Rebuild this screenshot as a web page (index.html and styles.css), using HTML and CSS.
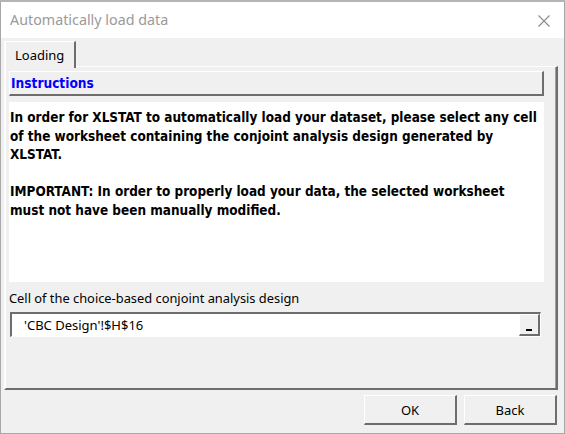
FILE: index.html
```html
<!DOCTYPE html>
<html>
<head>
<meta charset="utf-8">
<link rel="stylesheet" href="styles.css">
</head>
<body>
<div class="strip"></div>
<div class="window">
  <div class="titlebar">
    <span class="title">Automatically load data</span>
    <svg class="close" width="12" height="12" viewBox="0 0 12 12"><path d="M0.5 0.5 L11.5 11.5 M11.5 0.5 L0.5 11.5" stroke="#8a8a8a" stroke-width="1.1" fill="none"/></svg>
  </div>
  <div class="tabstrip">
    <div class="tab">Loading</div>
  </div>
  <div class="page">
    <div class="header">Instructions</div>
    <div class="textarea">
      <p>In order for XLSTAT to automatically load your dataset, please select any cell of the worksheet containing the conjoint analysis design generated by XLSTAT.</p>
      <p>IMPORTANT: In order to properly load your data, the selected worksheet must not have been manually modified.</p>
    </div>
    <div class="label">Cell of the choice-based conjoint analysis design</div>
    <div class="input">
      <span class="value">'CBC Design'!$H$16</span>
      <span class="pick"><span class="dash"></span></span>
    </div>
  </div>
  <div class="footer">
    <div class="btn">OK</div>
    <div class="btn">Back</div>
  </div>
</div>
</body>
</html>
```
FILE: styles.css
```css
html, body {
  margin: 0;
  padding: 0;
  background: #ffffff;
}
.strip {
  height: 2px;
  background: #b4b4b4;
}
.window {
  box-sizing: border-box;
  width: 565px;
  height: 432px;
  border-left: 1px solid #a8a8a8;
  border-right: 1px solid #a8a8a8;
  border-bottom: 1px solid #a8a8a8;
  background: #f0f0f0;
  display: flex;
  flex-direction: column;
  font-family: "Noto Sans", sans-serif;
}
.titlebar {
  height: 36px;
  background: #ffffff;
  display: flex;
  align-items: center;
  justify-content: space-between;
  padding: 0 14px 0 9px;
}
.title {
  font-size: 14.3px;
  color: #9a9a9a;
  padding-bottom: 1px;
}
.close {
  display: block;
  margin-top: 1px;
}
.tabstrip {
  display: flex;
  padding: 3px 0 0 3px;
}
.tab {
  position: relative;
  z-index: 1;
  box-sizing: border-box;
  width: 72px;
  height: 27px;
  margin-bottom: -2px;
  background: #f0f0f0;
  border-top: 1px solid #ffffff;
  border-left: 2px solid #ffffff;
  border-right: 2px solid #6d6d6d;
  font-size: 13px;
  color: #000;
  padding: 4px 0 0 9px;
}
.page {
  box-sizing: border-box;
  height: 324px;
  margin: 0 6px 0 3px;
  border-top: 1px solid #ffffff;
  border-left: 2px solid #ffffff;
  border-right: 2px solid #6d6d6d;
  border-bottom: 2px solid #6d6d6d;
  box-shadow: inset -1px 0 0 #a0a0a0;
  padding: 4px 12px 0 3px;
  display: flex;
  flex-direction: column;
}
.header {
  box-sizing: border-box;
  height: 25px;
  border-top: 1px solid #ffffff;
  border-left: 1px solid #ffffff;
  border-right: 2px solid #6d6d6d;
  border-bottom: 2px solid #6d6d6d;
  font-family: "DejaVu Sans Condensed", "DejaVu Sans", sans-serif;
  font-stretch: condensed;
  font-weight: bold;
  font-size: 13.6px;
  color: #0000ff;
  padding: 3px 0 0 1px;
}
.textarea {
  box-sizing: border-box;
  height: 180px;
  margin-top: 6px;
  background: #ffffff;
  padding: 7px 3px 0 1px;
  font-family: "DejaVu Sans Condensed", "DejaVu Sans", sans-serif;
  font-stretch: condensed;
  font-weight: bold;
  font-size: 13.45px;
  line-height: 18.5px;
  color: #000;
}
.textarea p {
  margin: 0 0 18.5px 0;
}
.label {
  margin-top: 8px;
  font-size: 12.85px;
  line-height: 17px;
  color: #000;
}
.input {
  box-sizing: border-box;
  height: 25px;
  margin: 5px 0 0 1px;
  width: 531px;
  background: #ffffff;
  border-top: 2px solid #6d6d6d;
  border-left: 2px solid #6d6d6d;
  border-right: 1px solid #ffffff;
  border-bottom: 1px solid #ffffff;
  display: flex;
  align-items: stretch;
  justify-content: space-between;
}
.value {
  font-size: 13px;
  padding: 2px 0 0 12px;
}
.pick {
  box-sizing: border-box;
  width: 21px;
  background: #f0f0f0;
  border-top: 1px solid #ffffff;
  border-left: 1px solid #ffffff;
  border-right: 2px solid #6d6d6d;
  border-bottom: 2px solid #6d6d6d;
  display: flex;
  align-items: flex-end;
  justify-content: center;
  padding-bottom: 3px;
}
.dash {
  display: block;
  width: 6px;
  height: 2px;
  background: #000;
}
.footer {
  display: flex;
  justify-content: flex-end;
  gap: 7px;
  padding: 5px 7px 0 0;
}
.btn {
  box-sizing: border-box;
  width: 93px;
  height: 30px;
  background: #f0f0f0;
  border-top: 1px solid #ffffff;
  border-left: 1px solid #ffffff;
  border-right: 2px solid #6d6d6d;
  border-bottom: 2px solid #6d6d6d;
  font-size: 13px;
  display: flex;
  align-items: center;
  justify-content: center;
  color: #000;
}
```
